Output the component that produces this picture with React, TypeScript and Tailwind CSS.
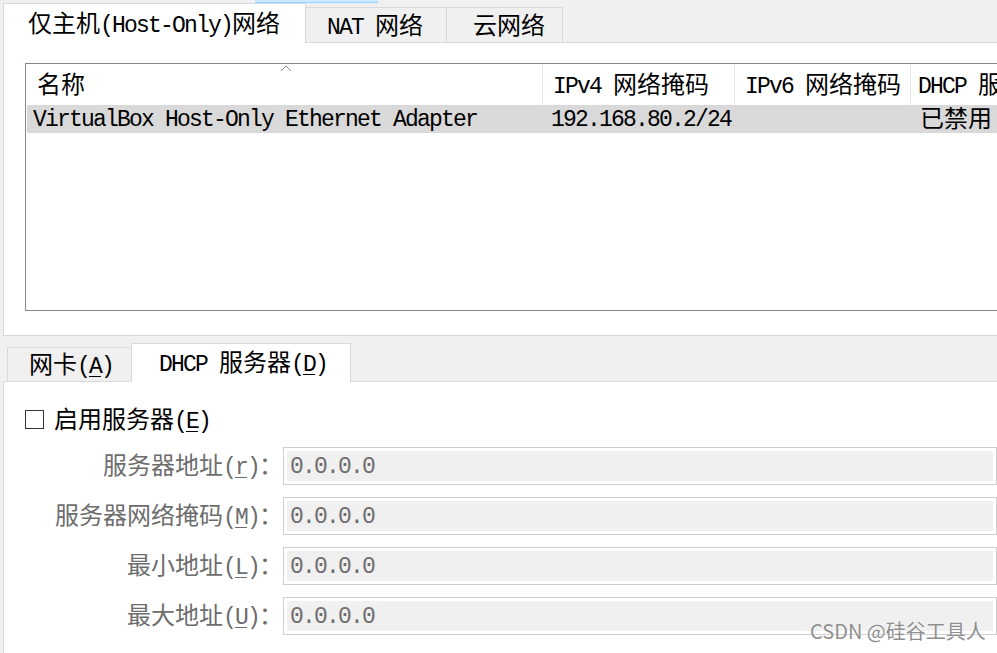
import React from 'react';

const CJK = /([\u2e80-\uffef]+)/;

// SimSun-like mixed text: half-width latin, full-width CJK, on one baseline
const T: React.FC<{ s: string }> = ({ s }) => (
    <span className="whitespace-pre">
        {s.split(CJK).filter(Boolean).map((p, i) =>
            CJK.test(p) ? (
                <span key={i} className="font-['Noto_Sans_CJK_SC',sans-serif] text-[24px] tracking-[0px]">{p}</span>
            ) : (
                <span key={i}>{p}</span>
            )
        )}
    </span>
);

const Key: React.FC<{ pre: string; k: string; post?: string }> = ({ pre, k, post = ')' }) => (
    <span className="whitespace-pre">
        <T s={pre} />
        <span className="underline underline-offset-[3px] decoration-1">{k}</span>
        <T s={post} />
    </span>
);

const Field: React.FC<{ label: React.ReactNode }> = ({ label }) => (
    <div className="flex items-center h-[38px]">
        <div className="w-[258px] shrink-0 text-right text-[#6d6d6d] whitespace-nowrap">{label}</div>
        <div className="flex-1 h-[38px] border border-[#cfcfcf] bg-white p-[3px]">
            <div className="h-full bg-[#f0f0f0] flex items-center pl-[3px] pt-[3px] text-[#6d6d6d]">0.0.0.0</div>
        </div>
    </div>
);

export default function App() {
    return (
        <div className="relative w-[997px] h-[653px] overflow-hidden bg-[#f0f0f0] text-black font-['Liberation_Mono',monospace] text-[23px] tracking-[-1.8px] leading-none">
            <div className="absolute left-[255px] top-0 w-[123px] h-[3px] bg-[#cce8ff] border-b border-[#99d1ff]" />

            {/* top tabs */}
            <div className="flex items-end h-[42px] pl-[3px]">
                <div className="relative z-10 -mb-px h-[40px] w-[303px] flex items-center pl-[24px] bg-white border border-b-0 border-[#d9d9d9]">
                    <T s="仅主机(Host-Only)网络" />
                </div>
                <div className="h-[35px] w-[141px] flex items-center pl-[21px] pt-[2px] border-t border-r border-[#d9d9d9]">
                    <T s="NAT 网络" />
                </div>
                <div className="h-[35px] w-[116px] flex items-center pl-[26px] pt-[2px] border-t border-r border-[#d9d9d9]">
                    <T s="云网络" />
                </div>
            </div>

            <div className="ml-[3px] h-[294px] bg-white border-l border-t border-b border-[#d9d9d9] pt-[20px] pl-[21px]">
                <div className="h-[248px] border-l border-t border-b border-[#828790] bg-white overflow-hidden">
                    <div className="flex h-[41px] whitespace-nowrap">
                        <div className="relative w-[517px] shrink-0 flex items-center pl-[11px] border-r border-[#e5e5e5]">
                            <T s="名称" />
                            <svg className="absolute left-[254px] top-[1px]" width="12" height="7" viewBox="0 0 12 7">
                                <polyline points="1,6 6,1 11,6" fill="none" stroke="#8a8a8a" strokeWidth="1" />
                            </svg>
                        </div>
                        <div className="w-[192px] shrink-0 flex items-center pl-[10px] border-r border-[#e5e5e5]">
                            <T s="IPv4 网络掩码" />
                        </div>
                        <div className="w-[176px] shrink-0 flex items-center pl-[10px] border-r border-[#e5e5e5]">
                            <T s="IPv6 网络掩码" />
                        </div>
                        <div className="flex-1 flex items-center pl-[7px]">
                            <T s="DHCP 服务器" />
                        </div>
                    </div>
                    <div className="flex h-[28px] ml-px bg-[#d9d9d9] whitespace-nowrap">
                        <div className="w-[516px] shrink-0 flex items-center pl-[6px] pt-[2px]">
                            <T s="VirtualBox Host-Only Ethernet Adapter" />
                        </div>
                        <div className="w-[192px] shrink-0 flex items-center pl-[8px] pt-[2px]">192.168.80.2/24</div>
                        <div className="w-[176px] shrink-0" />
                        <div className="flex-1 flex items-center pl-[9px]">
                            <T s="已禁用" />
                        </div>
                    </div>
                </div>
            </div>

            {/* bottom tabs */}
            <div className="flex items-end h-[45px] pl-[7px]">
                <div className="h-[34px] w-[124px] flex items-center pl-[21px] border-l border-t border-[#d9d9d9]">
                    <Key pre="网卡(" k="A" />
                </div>
                <div className="relative z-10 -mb-px h-[39px] w-[220px] flex items-center pl-[27px] bg-white border border-b-0 border-[#d9d9d9]">
                    <Key pre="DHCP 服务器(" k="D" />
                </div>
            </div>

            <div className="ml-[3px] h-[272px] bg-white border-l border-t border-[#d9d9d9] pl-[21px]">
                <div className="flex items-center h-[19px] mt-[28px]">
                    <div className="w-[19px] h-[19px] border border-[#333333] bg-white shrink-0" />
                    <div className="ml-[10px]">
                        <Key pre="启用服务器(" k="E" />
                    </div>
                </div>
                <div className="mt-[18px] flex flex-col gap-[12px]">
                    <Field label={<Key pre="服务器地址(" k="r" post=")：" />} />
                    <Field label={<Key pre="服务器网络掩码(" k="M" post=")：" />} />
                    <Field label={<Key pre="最小地址(" k="L" post=")：" />} />
                    <Field label={<Key pre="最大地址(" k="U" post=")：" />} />
                </div>
            </div>

            <div className="absolute left-[810px] top-[621px] font-['Noto_Sans_CJK_SC',sans-serif] text-[20px] tracking-[0px] text-[#8f8f8f] [text-shadow:0_0_2px_#ffffff] whitespace-nowrap">
                CSDN @硅谷工具人
            </div>
        </div>
    );
}
